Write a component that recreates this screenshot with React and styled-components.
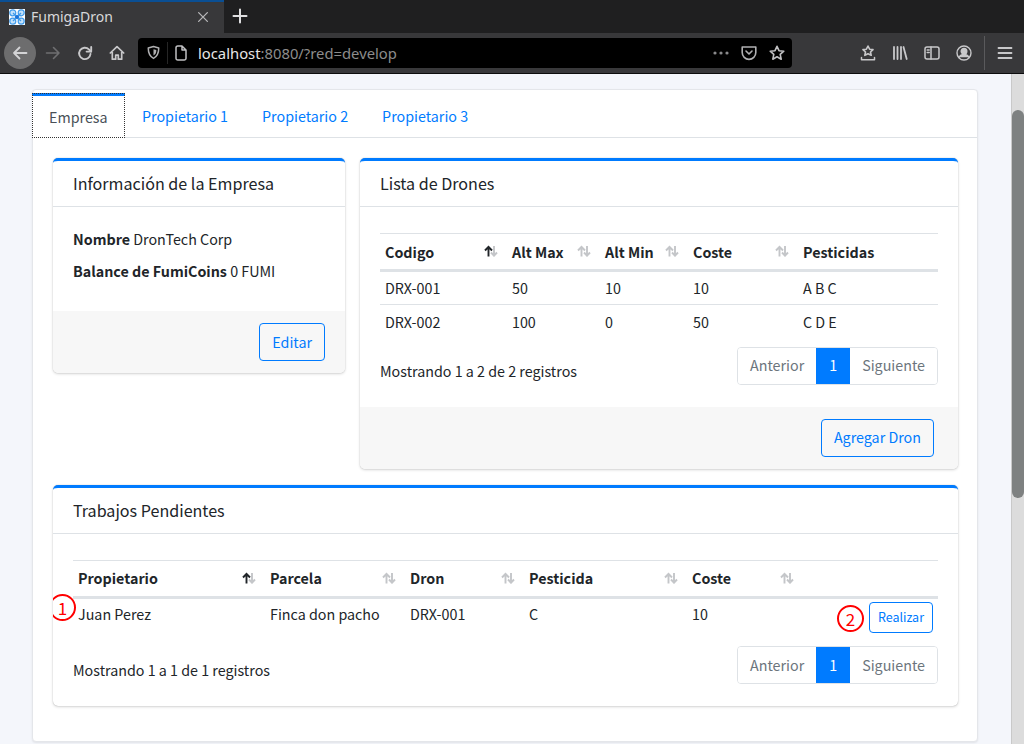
import React from "react";
import styled, { createGlobalStyle } from "styled-components";

const GlobalStyle = createGlobalStyle`
  html, body {
    margin: 0;
    padding: 0;
    height: 744px;
    overflow: hidden;
    background: #f4f6fb;
  }
  * { box-sizing: border-box; }
  body {
    font-family: "Noto Sans CJK JP", "Noto Sans", sans-serif;
    font-size: 14.3px;
    color: #212529;
  }
`;

const Window = styled.div`
  width: 1024px;
  height: 744px;
  display: flex;
  flex-direction: column;
  overflow: hidden;
`;

/* browser chrome */
const TabStrip = styled.div`
  height: 33px;
  flex: none;
  display: flex;
  align-items: center;
  background: #1f1f20;
`;

const BrowserTab = styled.div`
  width: 224px;
  height: 33px;
  display: flex;
  align-items: center;
  gap: 6px;
  padding: 0 14px 2px 9px;
  background: #38383a;
  border-top: 2px solid #0a4f94;
  color: #d8d8da;
  font-family: "Noto Sans", sans-serif;
  font-size: 14px;
`;

const TabTitle = styled.span`
  flex: 1;
`;

const NewTab = styled.div`
  width: 32px;
  height: 33px;
  padding-bottom: 2px;
  display: flex;
  align-items: center;
  justify-content: center;
`;

const Toolbar = styled.div`
  height: 41px;
  flex: none;
  display: flex;
  align-items: center;
  padding: 0 3px 1px 4px;
  background: #38383a;
  border-bottom: 1px solid #0c0c0d;
`;

const ToolButton = styled.div`
  width: 32px;
  height: 32px;
  flex: none;
  display: flex;
  align-items: center;
  justify-content: center;
  border-radius: 50%;
  background: ${(p) => (p.$round ? "#6d6d6e" : "transparent")};
  margin-right: ${(p) => (p.$gap ? "1px" : "0")};
`;

const UrlBar = styled.div`
  width: 654px;
  height: 30px;
  margin-left: 5px;
  display: flex;
  align-items: center;
  padding: 0 1px 0 7px;
  background: #000;
  border-radius: 4px;
  font-family: "Noto Sans", sans-serif;
  font-size: 14.8px;
  color: #8c8c8c;
`;

const UrlSlot = styled.div`
  width: ${(p) => p.$w || 28}px;
  flex: none;
  display: flex;
  align-items: center;
  justify-content: center;
`;

const UrlDivider = styled.div`
  width: 1px;
  height: 22px;
  margin: 0 5px 0 6px;
  background: #262626;
`;

const UrlText = styled.div`
  flex: 1;
  padding-left: 9px;
  white-space: nowrap;
  b {
    font-weight: 400;
    color: #e6e6e6;
  }
`;

const ToolRight = styled.div`
  margin-left: auto;
  display: flex;
  align-items: center;
`;

const ToolSeparator = styled.div`
  width: 1px;
  height: 34px;
  margin: 0 4px 0 4px;
  background: #5a5a5c;
`;

/* page */
const Viewport = styled.div`
  flex: 1;
  min-height: 0;
  display: flex;
`;

const PageArea = styled.div`
  flex: 1;
  min-width: 0;
  padding: 15px 33px 0 32px;
  background: #f4f6fb;
`;

const Scrollbar = styled.div`
  width: 13px;
  flex: none;
  padding-top: 36px;
  background: #dcdcdc;
  border-left: 1px solid #c9c9c9;
`;

const ScrollThumb = styled.div`
  height: 388px;
  background: #7e8181;
  border-radius: 7px;
`;

const MainCard = styled.div`
  height: 653px;
  background: #fff;
  border: 1px solid #e4e6ea;
  border-radius: 4px;
  box-shadow: 0 1px 2px rgba(0, 0, 0, 0.08);
`;

const TabBar = styled.div`
  height: 48px;
  display: flex;
  align-items: flex-end;
  border-bottom: 1px solid #dee2e6;
`;

const PageTab = styled.div`
  height: 45px;
  padding: ${(p) => (p.$active ? "0 17px 1px" : "2px 17px 0")};
  display: flex;
  align-items: center;
  white-space: nowrap;
  color: ${(p) => (p.$active ? "#495057" : "#007bff")};
  background: #fff;
  ${(p) =>
    p.$active &&
    `
    width: 93px;
    margin: 0 0 -1px -1px;
    border-top: 3px solid #007bff;
    outline: 1px dotted #333;
    outline-offset: -1px;
  `}
`;

const TabContent = styled.div`
  padding: 20px 19px 20px 20px;
`;

const TopRow = styled.div`
  display: flex;
  align-items: flex-start;
  gap: 15px;
  margin-bottom: 16px;
`;

const Card = styled.section`
  width: ${(p) => (p.$narrow ? "292px" : "auto")};
  flex: ${(p) => (p.$narrow ? "none" : "1")};
  background: #fff;
  border-top: 3px solid #007bff;
  border-radius: 5px;
  box-shadow: 0 0 1px rgba(0, 0, 0, 0.3), 0 1px 3px rgba(0, 0, 0, 0.16);
  overflow: hidden;
`;

const CardHeader = styled.h3`
  height: 46px;
  margin: 0;
  padding: 0 20px 1px;
  display: flex;
  align-items: center;
  font-size: 16.1px;
  font-weight: 400;
  border-bottom: 1px solid #dee2e6;
`;

const CardBody = styled.div`
  padding: ${(p) => (p.$table ? "26px 20px 22px" : "20px")};
`;

const InfoLine = styled.p`
  margin: 0 0 8px;
  line-height: 24px;
  b {
    font-weight: 700;
  }
`;

const CardFooter = styled.div`
  display: flex;
  justify-content: flex-end;
  padding: 12px ${(p) => (p.$wide ? "24px" : "20px")} 12px 20px;
  background: #f7f7f7;
`;

const OutlineButton = styled.button`
  height: ${(p) => (p.$small ? "31px" : "38px")};
  padding: 0 ${(p) => (p.$small ? "8px" : "12px")} 2px;
  font: inherit;
  font-size: ${(p) => (p.$small ? "12.5px" : "14.3px")};
  color: #007bff;
  background: transparent;
  border: 1px solid #007bff;
  border-radius: 4px;
`;

const DataTable = styled.table`
  width: 100%;
  table-layout: fixed;
  border-collapse: collapse;
`;

const Th = styled.th`
  width: ${(p) => p.$w}px;
  height: 37px;
  padding: 0 9px 1px 5px;
  font-weight: 700;
  text-align: left;
  border-top: 1px solid #dee2e6;
  border-bottom: 3px solid #dee2e6;
`;

const ThInner = styled.div`
  display: flex;
  align-items: center;
  justify-content: space-between;
`;

const Td = styled.td`
  height: ${(p) => p.$h || 34}px;
  padding: ${(p) => (p.$top ? "4px" : "0")} 5px ${(p) => (p.$line || p.$top ? "0" : "2px")};
  vertical-align: ${(p) => (p.$top ? "top" : "middle")};
  border-top: ${(p) => (p.$line ? "1px solid #dee2e6" : "none")};
  position: relative;
`;

const ActionCell = styled.div`
  display: flex;
  justify-content: flex-end;
  margin-top: -1px;
`;

const TableFoot = styled.div`
  display: flex;
  align-items: flex-start;
  justify-content: space-between;
  margin-top: 8px;
`;

const FootInfo = styled.span`
  padding-top: 13px;
`;

const Pager = styled.div`
  display: flex;
  height: 38px;
  border: 1px solid #dee2e6;
  border-radius: 4px;
  overflow: hidden;
  color: #6c757d;
`;

const PagerItem = styled.div`
  display: flex;
  align-items: center;
  padding: 0 ${(p) => (p.$active ? "13px" : "12px")} 2px;
  color: ${(p) => (p.$active ? "#fff" : "#6c757d")};
  background: ${(p) => (p.$active ? "#007bff" : "#fff")};
  margin: ${(p) => (p.$active ? "-1px 0" : "0")};
`;

const Marker = styled.span`
  position: absolute;
  left: ${(p) => p.$left}px;
  top: ${(p) => p.$top}px;
  width: 27px;
  height: 27px;
  display: flex;
  align-items: center;
  justify-content: center;
  border: 2px solid #f00;
  border-radius: 50%;
  color: #f00;
  font-size: 17px;
  background: transparent;
`;

/* icons */
const Ico = ({ children, size = 16, c = "#c8c8ca", w = 1.6 }) => (
  <svg width={size} height={size} viewBox="0 0 16 16" fill="none" stroke={c} strokeWidth={w} strokeLinecap="round" strokeLinejoin="round">
    {children}
  </svg>
);

const SortArrows = ({ up }) => (
  <svg width="14" height="12" viewBox="0 0 14 12" fill="none" strokeWidth="1.9" style={{ flex: "none" }}>
    <path d="M10 1v10M7 7.500l3 3.200 3-3.200" stroke="#c4c6c9" />
    <path d="M4.500 11.500V2M1 5.500l3.500-3.700L8 5.500" stroke={up ? "#212529" : "#c4c6c9"} />
  </svg>
);

const Favicon = () => (
  <svg width="16" height="16" viewBox="0 0 16 16" style={{ flex: "none" }}>
    <rect width="16" height="16" fill="#fff" />
    <g fill="#c4e2fa" stroke="#3f9bec" strokeWidth="1.2">
      <circle cx="3.800" cy="3.800" r="3" />
      <circle cx="12.200" cy="3.800" r="3" />
      <circle cx="3.800" cy="12.200" r="3" />
      <circle cx="12.200" cy="12.200" r="3" />
    </g>
    <path d="M4 4l8 8M12 4l-8 8" stroke="#3f9bec" strokeWidth="1.300" />
    <path d="M8 5.400L10.600 8 8 10.600 5.400 8z" fill="#1a73d8" />
  </svg>
);

const HeadCell = ({ w, label, up, plain }) => (
  <Th $w={w}>
    <ThInner>
      <span>{label}</span>
      {!plain && <SortArrows up={up} />}
    </ThInner>
  </Th>
);

const PagerBar = () => (
  <Pager>
    <PagerItem>Anterior</PagerItem>
    <PagerItem $active>1</PagerItem>
    <PagerItem>Siguiente</PagerItem>
  </Pager>
);

const BrowserChrome = () => (
  <>
    <TabStrip>
      <BrowserTab>
        <Favicon />
        <TabTitle>FumigaDron</TabTitle>
        <Ico size={14} c="#b8b8ba" w={1.5}><path d="M3 3l10 10M13 3L3 13" /></Ico>
      </BrowserTab>
      <NewTab>
        <Ico size={16} c="#e0e0e2" w={2}><path d="M8 1.500v13M1.500 8h13" /></Ico>
      </NewTab>
    </TabStrip>
    <Toolbar>
      <ToolButton $round $gap>
        <Ico c="#d4d4d6" w={1.8}><path d="M14.500 8H2M7.500 2.500L2 8l5.500 5.500" /></Ico>
      </ToolButton>
      <ToolButton>
        <Ico c="#6f6f71" w={1.6}><path d="M1.500 8H14M8.500 2.500L14 8l-5.500 5.500" /></Ico>
      </ToolButton>
      <ToolButton>
        <Ico w={1.9}><path d="M13.500 9a5.700 5.700 0 1 1-1.600-4.600L14 6.500" /><path d="M14.200 2v4.600H9.600" /></Ico>
      </ToolButton>
      <ToolButton>
        <Ico w={1.7}><path d="M1.300 8L8 1.600 14.700 8M3.300 7v7.200h3.400v-4h2.600v4h3.400V7" /></Ico>
      </ToolButton>
      <UrlBar>
        <UrlSlot $w={16}>
          <Ico size={15} c="#b0b0b2"><path d="M8 1.700l5.600 1.600c0 5.400-1.600 9-5.600 11-4-2-5.600-5.600-5.600-11z" /><path d="M8 4.400l3 .8c0 3-.8 4.600-3 6z" fill="#b0b0b2" stroke="none" /></Ico>
        </UrlSlot>
        <UrlDivider />
        <UrlSlot $w={16}>
          <Ico c="#c0c0c2" w={1.5}><path d="M3 2.800A1.800 1.800 0 0 1 4.800 1H9l4 4v8.200a1.800 1.800 0 0 1-1.800 1.800H4.800A1.800 1.800 0 0 1 3 13.200zM9 1v4h4" /></Ico>
        </UrlSlot>
        <UrlText><b>localhost</b>:8080/?red=develop</UrlText>
        <UrlSlot>
          <svg width="16" height="4" viewBox="0 0 16 4" fill="#8a8a8c"><circle cx="2" cy="2" r="1.600" /><circle cx="8" cy="2" r="1.600" /><circle cx="14" cy="2" r="1.600" /></svg>
        </UrlSlot>
        <UrlSlot>
          <Ico c="#b0b0b2"><path d="M1.200 2h13.600v5.600a6.800 6.800 0 0 1-13.600 0z" /><path d="M5 6l3 3 3-3" /></Ico>
        </UrlSlot>
        <UrlSlot>
          <Ico c="#c0c0c2"><path d="M8 1.300l2 4.400 4.800.5-3.600 3.200 1 4.800L8 11.800l-4.200 2.400 1-4.800L1.200 6.200 6 5.700z" /></Ico>
        </UrlSlot>
      </UrlBar>
      <ToolRight>
        <ToolButton>
          <Ico><path d="M8 1l1.600 3.200 3.400.4-2.500 2.400.7 3.300L8 8.700l-3.200 1.600.7-3.300L3 4.600l3.400-.4z" /><path d="M1.500 12.500v2.200h13v-2.200" strokeWidth="1.500" /></Ico>
        </ToolButton>
        <ToolButton>
          <Ico w={1.8}><path d="M2 2v12M5.500 2v12M9 2v12M11.500 2l3.200 12" /></Ico>
        </ToolButton>
        <ToolButton>
          <Ico w={1.5}><rect x="1" y="2" width="14" height="12" rx="2" /><path d="M7 2v12M3.200 5h2M3.200 7.500h2" /></Ico>
        </ToolButton>
        <ToolButton>
          <Ico w={1.4}><circle cx="8" cy="8" r="7" /><circle cx="8" cy="6.300" r="2.800" fill="#c8c8ca" /><path d="M3.200 12.200c1-2 3-2.700 4.800-2.700s3.800.7 4.800 2.700" fill="#c8c8ca" /></Ico>
        </ToolButton>
        <ToolSeparator />
        <ToolButton>
          <Ico w={1.8}><path d="M1.500 3h13M1.500 8h13M1.500 13h13" /></Ico>
        </ToolButton>
      </ToolRight>
    </Toolbar>
  </>
);

const App = () => (
  <Window>
    <GlobalStyle />
    <BrowserChrome />
    <Viewport>
      <PageArea>
        <MainCard>
          <TabBar>
            <PageTab $active>Empresa</PageTab>
            <PageTab>Propietario 1</PageTab>
            <PageTab>Propietario 2</PageTab>
            <PageTab>Propietario 3</PageTab>
          </TabBar>
          <TabContent>
            <TopRow>
              <Card $narrow>
                <CardHeader>Información de la Empresa</CardHeader>
                <CardBody>
                  <InfoLine><b>Nombre</b> DronTech Corp</InfoLine>
                  <InfoLine><b>Balance de FumiCoins</b> 0 FUMI</InfoLine>
                </CardBody>
                <CardFooter>
                  <OutlineButton>Editar</OutlineButton>
                </CardFooter>
              </Card>
              <Card>
                <CardHeader>Lista de Drones</CardHeader>
                <CardBody $table>
                  <DataTable>
                    <thead>
                      <tr>
                        <HeadCell w={127} label="Codigo" up />
                        <HeadCell w={93} label="Alt Max" />
                        <HeadCell w={88} label="Alt Min" />
                        <HeadCell w={110} label="Coste" />
                        <HeadCell w={140} label="Pesticidas" plain />
                      </tr>
                    </thead>
                    <tbody>
                      <tr><Td>DRX-001</Td><Td>50</Td><Td>10</Td><Td>10</Td><Td>A B C</Td></tr>
                      <tr><Td $line>DRX-002</Td><Td $line>100</Td><Td $line>0</Td><Td $line>50</Td><Td $line>C D E</Td></tr>
                    </tbody>
                  </DataTable>
                  <TableFoot>
                    <FootInfo>Mostrando 1 a 2 de 2 registros</FootInfo>
                    <PagerBar />
                  </TableFoot>
                </CardBody>
                <CardFooter $wide>
                  <OutlineButton>Agregar Dron</OutlineButton>
                </CardFooter>
              </Card>
            </TopRow>
            <Card>
              <CardHeader>Trabajos Pendientes</CardHeader>
              <CardBody $table>
                <DataTable>
                  <thead>
                    <tr>
                      <HeadCell w={192} label="Propietario" up />
                      <HeadCell w={140} label="Parcela" />
                      <HeadCell w={119} label="Dron" />
                      <HeadCell w={163} label="Pesticida" />
                      <HeadCell w={116} label="Coste" />
                      <HeadCell w={135} label="" plain />
                    </tr>
                  </thead>
                  <tbody>
                    <tr>
                      <Td $h={41} $top>Juan Perez<Marker $left={-24} $top={-5}>1</Marker></Td>
                      <Td $h={41} $top>Finca don pacho</Td>
                      <Td $h={41} $top>DRX-001</Td>
                      <Td $h={41} $top>C</Td>
                      <Td $h={41} $top>10</Td>
                      <Td $h={41} $top>
                        <ActionCell><OutlineButton $small>Realizar</OutlineButton></ActionCell>
                        <Marker $left={34} $top={6}>2</Marker>
                      </Td>
                    </tr>
                  </tbody>
                </DataTable>
                <TableFoot>
                  <FootInfo>Mostrando 1 a 1 de 1 registros</FootInfo>
                  <PagerBar />
                </TableFoot>
              </CardBody>
            </Card>
          </TabContent>
        </MainCard>
      </PageArea>
      <Scrollbar>
        <ScrollThumb />
      </Scrollbar>
    </Viewport>
  </Window>
);

export default App;
